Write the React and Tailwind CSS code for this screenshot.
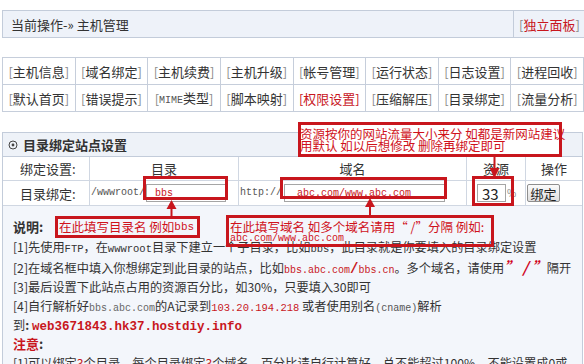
import React from "react";

const navItems = [
  "主机信息", "域名绑定", "主机续费", "主机升级", "帐号管理", "运行状态", "日志设置", "进程回收",
  "默认首页", "错误提示", "MIME类型", "脚本映射", "权限设置", "压缩解压", "目录绑定", "流量分析",
];

const NavItem = ({ label }) => {
  const red = label === "权限设置";
  const isMime = label === "MIME类型";
  return (
    <div className="flex h-[27px] items-center justify-center border-b border-r border-[#c6cedb]">
      <span className={red ? "text-[#c8161d]" : "text-[#8a8a8a]"}>[</span>
      {isMime ? (
        <span>
          <span className="font-['Liberation_Mono',monospace] text-[10px] text-[#555]">MIME</span>类型
        </span>
      ) : (
        <span className={red ? "text-[#c8161d]" : "text-[#333]"}>{label}</span>
      )}
      <span className={red ? "text-[#c8161d]" : "text-[#8a8a8a]"}>]</span>
    </div>
  );
};

const mono = "font-['Liberation_Mono',monospace]";

const App = () => {
  return (
    <div className="relative h-[364px] w-[584px] overflow-hidden bg-white pl-[2px] pt-[10px] font-['Noto_Sans_CJK_SC',sans-serif] text-[13px] text-[#333]">
      {/* 当前操作 */}
      <div className="flex h-[28px] w-[620px] border border-[#c3ccda] bg-[#eef2f9]">
        <div className="flex w-[511px] items-center border-r border-[#c3ccda] pl-[8px] leading-none">
          当前操作-» 主机管理
        </div>
        <div className="flex flex-1 items-center pl-[5px] leading-none">
          <span className="text-[#8a8a8a]">[</span>
          <span className="text-[#c8161d]">独立面板</span>
          <span className="text-[#8a8a8a]">]</span>
        </div>
      </div>

      {/* nav */}
      <div className="mt-[19px] grid w-[582px] grid-cols-8 border-l border-t border-[#c6cedb] leading-none">
        {navItems.map((n) => (
          <NavItem key={n} label={n} />
        ))}
      </div>

      {/* section */}
      <div className="mt-[20px] w-[581px] border-l border-r border-t border-[#c3ccda]">
        <div className="flex h-[24px] items-center gap-[5px] border-b border-[#c3ccda] bg-[#eef2f8] pl-[5px]">
          <svg width="10" height="10" viewBox="0 0 10 10">
            <circle cx="5" cy="5" r="4" fill="none" stroke="#444" strokeWidth="1" />
            <circle cx="5" cy="5" r="1.4" fill="#444" />
          </svg>
          <span className="font-bold leading-none">目录绑定站点设置</span>
        </div>
        <div className="grid grid-cols-[87px_149px_228px_59px_1fr] leading-none">
          <div className="flex h-[24px] items-center border-b border-r border-[#d0d7e2] pl-[17px]">绑定设置:</div>
          <div className="flex h-[24px] items-center justify-center border-b border-r border-[#d0d7e2]">目录</div>
          <div className="flex h-[24px] items-center justify-center border-b border-r border-[#d0d7e2]">域名</div>
          <div className="flex h-[24px] items-center justify-center border-b border-r border-[#d0d7e2]">资源</div>
          <div className="flex h-[24px] items-center justify-center border-b border-[#d0d7e2]">操作</div>

          <div className="flex h-[25px] items-center border-b border-r border-[#d0d7e2] pl-[17px]">目录绑定:</div>
          <div className="flex h-[25px] items-center border-b border-r border-[#d0d7e2] pl-[1px]">
            <span className={`${mono} text-[10px] text-[#555]`}>/wwwroot/</span>
            <input
              readOnly
              value="bbs"
              className={`ml-[1px] h-[18px] w-[80px] border border-[#a5a5a5] bg-white pl-[8px] ${mono} text-[10px] text-[#c8161d] outline-none`}
            />
          </div>
          <div className="flex h-[25px] items-center border-b border-r border-[#d0d7e2] pl-[1px]">
            <span className={`${mono} text-[10px] text-[#555]`}>http://</span>
            <input
              readOnly
              value="abc.com/www.abc.com"
              className={`ml-[2px] h-[18px] w-[161px] border border-[#a5a5a5] bg-white pl-[12px] ${mono} text-[10px] text-[#c8161d] outline-none`}
            />
          </div>
          <div className="flex h-[25px] items-center border-b border-r border-[#d0d7e2] pl-[10px]">
            <input
              readOnly
              value="33"
              className="h-[18px] w-[29px] border border-[#a5a5a5] bg-white pl-[4px] text-[15px] text-[#222] outline-none"
            />
            <span className="ml-[1px] text-[10px] text-[#888]">%</span>
          </div>
          <div className="flex h-[25px] items-center border-b border-[#d0d7e2] pl-[1px]">
            <button className="h-[18px] w-[33px] rounded-[2px] border border-[#8e8e8e] bg-gradient-to-b from-[#fbfbfb] to-[#dedede] text-[13px] leading-none text-[#222]">
              绑定
            </button>
          </div>
        </div>

        {/* 说明 */}
        <div className="h-[200px] bg-[#f3f6fb] pl-[10px] pt-[10px] text-[12.2px]">
          <div className="h-[21px] text-[13px] font-bold leading-[21px]">说明:</div>
          <div className="h-[20px] whitespace-nowrap leading-[20px]">
            [1]先使用<span className={`${mono} text-[10.5px]`}>FTP</span>，在
            <span className={`${mono} text-[10.5px]`}>wwwroot</span>目录下建立一个子目录，比如
            <span className={`${mono} text-[10.5px]`}>bbs</span>，此目录就是你要填入的目录绑定设置
          </div>
          <div className="h-[20px] whitespace-nowrap leading-[20px]">
            [2]在域名框中填入你想绑定到此目录的站点，比如
            <span className={`${mono} text-[10px] text-[#c8161d]`}>
              bbs.abc.com<span className="text-[14px] font-bold">/</span>bbs.cn
            </span>
            。多个域名，请使用
            <span className="text-[15px] font-bold italic text-[#d0021b]">” / ”</span>
            隔开
          </div>
          <div className="h-[20px] whitespace-nowrap leading-[20px]">
            [3]最后设置下此站点占用的资源百分比，如30%，只要填入30即可
          </div>
          <div className="h-[18px] whitespace-nowrap leading-[18px]">
            [4]自行解析好<span className={`${mono} text-[10px] text-[#666]`}>bbs.abc.com</span>的A记录到
            <span className={`${mono} text-[10.5px] text-[#c8161d]`}>103.20.194.218</span> 或者使用别名
            <span className={`${mono} text-[10px] text-[#555]`}>(cname)</span>解析
          </div>
          <div className="h-[20px] whitespace-nowrap leading-[20px]">
            到<span className="font-bold">:</span>{" "}
            <span className={`${mono} text-[12.5px] font-bold text-[#c8161d]`}>web3671843.hk37.hostdiy.info</span>
          </div>
          <div className="h-[18px] text-[13px] font-bold leading-[18px] text-[#c8161d]">
            注意<span className="text-[#333]">:</span>
          </div>
          <div className="h-[20px] whitespace-nowrap leading-[20px]">
            [1]可以绑定<span className="text-[#c8161d]">3</span>个目录，每个目录绑定
            <span className="text-[#c8161d]">3</span>个域名，百分比请自行计算好，总不能超过100%，不能设置成0或
          </div>
        </div>
      </div>

      {/* annotations */}
      <div className="absolute left-[298px] top-[122px] h-[35px] w-[264px] border-[3px] border-[#c8161d] bg-white pt-[3px] text-[12.5px] leading-[12px] text-[#d0121b]">
        <div className="-ml-[1px] whitespace-nowrap">资源按你的网站流量大小来分 如都是新网站建议</div>
        <div className="-ml-[1px] whitespace-nowrap">用默认 如以后想修改 删除再绑定即可</div>
      </div>
      <div className="absolute left-[143px] top-[176px] h-[24px] w-[85px] border-[3px] border-[#c8161d]" />
      <div className="absolute left-[280px] top-[177px] h-[22px] w-[167px] border-[3px] border-[#c8161d]" />
      <div className="absolute left-[472px] top-[176px] h-[30px] w-[42px] border-[3px] border-[#c8161d]" />
      <div className="absolute left-[55px] top-[216px] flex h-[22px] w-[145px] items-center whitespace-nowrap border-[3px] border-[#c8161d] pl-[1px] text-[12.5px] leading-none text-[#d0121b]">
        在此填写目录名 例如<span className={`${mono} text-[11px]`}>bbs</span>
      </div>
      <div className="absolute left-[226px] top-[215px] h-[32px] w-[268px] border-[3px] border-[#c8161d] pl-[1px] pt-[2px] text-[#d0121b]">
        <div className="whitespace-nowrap text-[12.5px] leading-[14px]">在此填写域名 如多个域名请用“ /”分隔 例如:</div>
        <div className={`whitespace-nowrap ${mono} text-[10px] leading-[10px]`}>abc.com/www.abc.com</div>
      </div>

      <svg className="pointer-events-none absolute left-0 top-0" width="584" height="364">
        <g fill="#c8161d" stroke="#c8161d" strokeWidth="2">
          <line x1="494.5" y1="157" x2="494.5" y2="170" />
          <polygon points="489.5,168 499.5,168 494.5,178" strokeWidth="0" />
          <line x1="171.5" y1="216" x2="171.5" y2="207" />
          <polygon points="166.5,209 176.5,209 171.5,200" strokeWidth="0" />
          <line x1="370" y1="215" x2="370" y2="205" />
          <polygon points="365,207 375,207 370,198" strokeWidth="0" />
        </g>
      </svg>
    </div>
  );
};

export default App;
